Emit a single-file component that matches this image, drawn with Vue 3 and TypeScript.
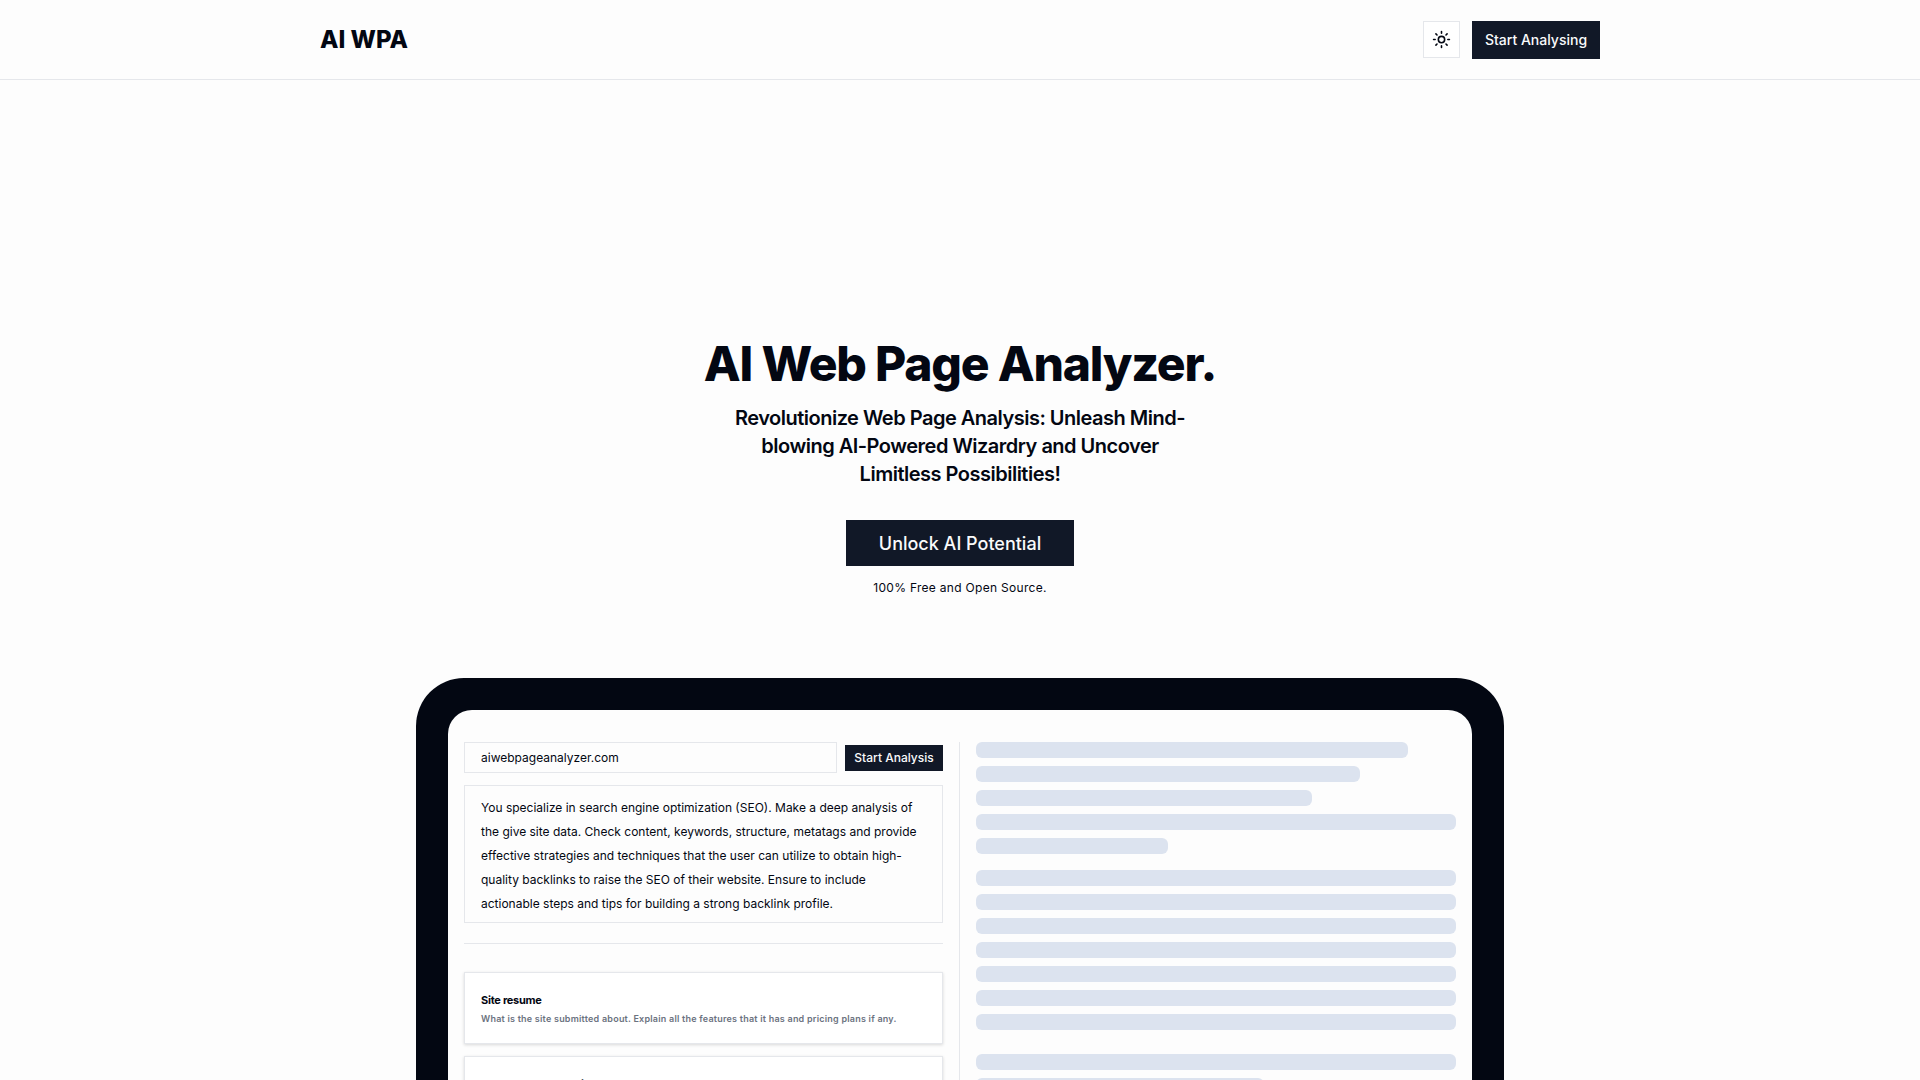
<script setup lang="ts">
import { ref } from 'vue'

interface Topic {
  title: string
  text: string
}

const url = ref('aiwebpageanalyzer.com')
const prompt = ref(
  'You specialize in search engine optimization (SEO). Make a deep analysis of the give site data. Check content, keywords, structure, metatags and provide effective strategies and techniques that the user can utilize to obtain high-quality backlinks to raise the SEO of their website. Ensure to include actionable steps and tips for building a strong backlink profile.',
)

const topics: Topic[] = [
  {
    title: 'Site resume',
    text: 'What is the site submitted about. Explain all the features that it has and pricing plans if any.',
  },
  {
    title: 'Create YouTube script',
    text: '',
  },
]

// Placeholder line widths, in percent of the column, grouped by paragraph
const paragraphs: number[][] = [
  [90, 80, 70, 100, 40],
  [100, 100, 100, 100, 100, 100, 100],
  [100, 60],
]
</script>

<template>
  <header class="topbar">
    <div class="topbar-inner">
      <a class="brand" href="#">AI WPA</a>
      <div class="actions">
        <button class="theme" type="button" aria-label="Toggle theme">
          <svg viewBox="0 0 24 24" width="19" height="19" fill="none" stroke="currentColor" stroke-width="2" stroke-linecap="round" stroke-linejoin="round">
            <circle cx="12" cy="12" r="4" />
            <path d="M12 2v2M12 20v2M4.93 4.93l1.41 1.41M17.66 17.66l1.41 1.41M2 12h2M20 12h2M6.34 17.66l-1.41 1.41M19.07 4.93l-1.41 1.41" />
          </svg>
        </button>
        <button class="solid start" type="button">Start Analysing</button>
      </div>
    </div>
  </header>

  <main>
    <section class="hero">
      <h1>AI Web Page Analyzer.</h1>
      <h2>Revolutionize Web Page Analysis: Unleash Mind-blowing AI-Powered Wizardry and Uncover Limitless Possibilities!</h2>
      <button class="solid unlock" type="button">Unlock AI Potential</button>
      <p class="note">100% Free and Open Source.</p>
    </section>

    <section class="device">
      <div class="screen">
        <div class="panel">
          <form class="url-row" @submit.prevent>
            <input v-model="url" class="field url" type="text" aria-label="Site address" />
            <button class="solid analyse" type="submit">Start Analysis</button>
          </form>
          <textarea v-model="prompt" class="field prompt" rows="5" aria-label="Prompt"></textarea>
          <hr />
          <div class="topics">
            <article v-for="topic in topics" :key="topic.title" class="topic">
              <h3>{{ topic.title }}</h3>
              <p v-if="topic.text">{{ topic.text }}</p>
            </article>
          </div>
        </div>
        <div class="result">
          <div v-for="(lines, p) in paragraphs" :key="p" class="paragraph">
            <div v-for="(w, i) in lines" :key="i" class="line" :style="{ width: w + '%' }"></div>
          </div>
        </div>
      </div>
    </section>
  </main>
</template>

<style>
body {
  height: 100vh;
  overflow: hidden;
  background: #fdfdfd;
  color: #030712;
  font-family: Inter, "Liberation Sans", sans-serif;
}
</style>

<style scoped>
* {
  box-sizing: border-box;
}
h1,
h2,
h3,
p {
  margin: 0;
}
button,
input,
textarea {
  font-family: inherit;
  color: inherit;
  border-radius: 0;
}
.topbar {
  border-bottom: 1px solid #e5e7eb;
}
.topbar-inner {
  max-width: 1280px;
  height: 79px;
  margin: 0 auto;
  display: flex;
  align-items: center;
  justify-content: space-between;
}
.brand {
  color: inherit;
  text-decoration: none;
  font-size: 24px;
  line-height: 32px;
  font-weight: 800;
}
.actions {
  display: flex;
  align-items: center;
  gap: 12px;
}
.theme {
  width: 37px;
  height: 37px;
  padding: 0;
  display: flex;
  align-items: center;
  justify-content: center;
  background: #fff;
  border: 1px solid #e5e7eb;
}
.solid {
  border: 0;
  background: #111827;
  color: #f9fafb;
  font-weight: 500;
}
.start {
  height: 38px;
  width: 128px;
  padding: 0;
  font-size: 14px;
}
.hero {
  display: flex;
  flex-direction: column;
  align-items: center;
  padding: 256px 16px 80px;
  text-align: center;
}
h1 {
  font-size: 48px;
  line-height: 56px;
  font-weight: 800;
  letter-spacing: -0.025em;
}
h2 {
  max-width: 480px;
  margin-top: 12px;
  font-size: 20px;
  line-height: 28px;
  font-weight: 600;
  letter-spacing: -0.025em;
}
.unlock {
  width: 228px;
  height: 46px;
  margin-top: 32px;
  padding: 0;
  font-size: 18px;
}
.note {
  margin-top: 12px;
  font-size: 12px;
  line-height: 20px;
  letter-spacing: 0.025em;
}
.device {
  max-width: 1088px;
  margin: 0 auto;
  padding: 32px 32px 0;
  border-radius: 48px 48px 0 0;
  background: #030712;
}
.screen {
  display: grid;
  grid-template-columns: 1fr 1fr;
  padding: 32px 16px;
  border-radius: 24px 24px 0 0;
  background: #fdfdfd;
}
.panel {
  min-width: 0;
  padding-right: 16px;
  border-right: 1px solid #e5e7eb;
}
.result {
  min-width: 0;
  padding-left: 16px;
}
.url-row {
  display: flex;
  align-items: center;
  gap: 8px;
}
.field {
  border: 1px solid #e5e7eb;
  background: transparent;
  padding: 0 16px;
  font-size: 12px;
}
.url {
  flex: 1;
  min-width: 0;
  height: 31px;
}
.analyse {
  width: 98px;
  height: 26px;
  padding: 0;
  font-size: 12px;
}
.prompt {
  display: block;
  width: 100%;
  height: 138px;
  margin-top: 12px;
  padding: 10px 16px 0;
  line-height: 24px;
  resize: none;
  overflow: hidden;
}
hr {
  height: 1px;
  margin: 20px 0 28px;
  border: 0;
  background: #e5e7eb;
}
.topics {
  display: flex;
  flex-direction: column;
  gap: 12px;
}
.topic {
  padding: 19px 16px 17px;
  border: 1px solid #e5e7eb;
  background: #fff;
  box-shadow: 0 1px 3px rgba(0, 0, 0, 0.15);
}
.topic h3 {
  font-size: 11px;
  line-height: 16px;
  font-weight: 700;
  letter-spacing: -0.025em;
}
.topic p {
  margin-top: 4px;
  font-size: 9px;
  line-height: 14px;
  font-weight: 600;
  letter-spacing: 0.025em;
  color: #6b7280;
}
.paragraph {
  display: flex;
  flex-direction: column;
  gap: 8px;
}
.paragraph + .paragraph {
  margin-top: 16px;
}
.paragraph:nth-child(3) {
  margin-top: 24px;
}
.line {
  height: 16px;
  border-radius: 6px;
  background: #dce3ef;
}
</style>
